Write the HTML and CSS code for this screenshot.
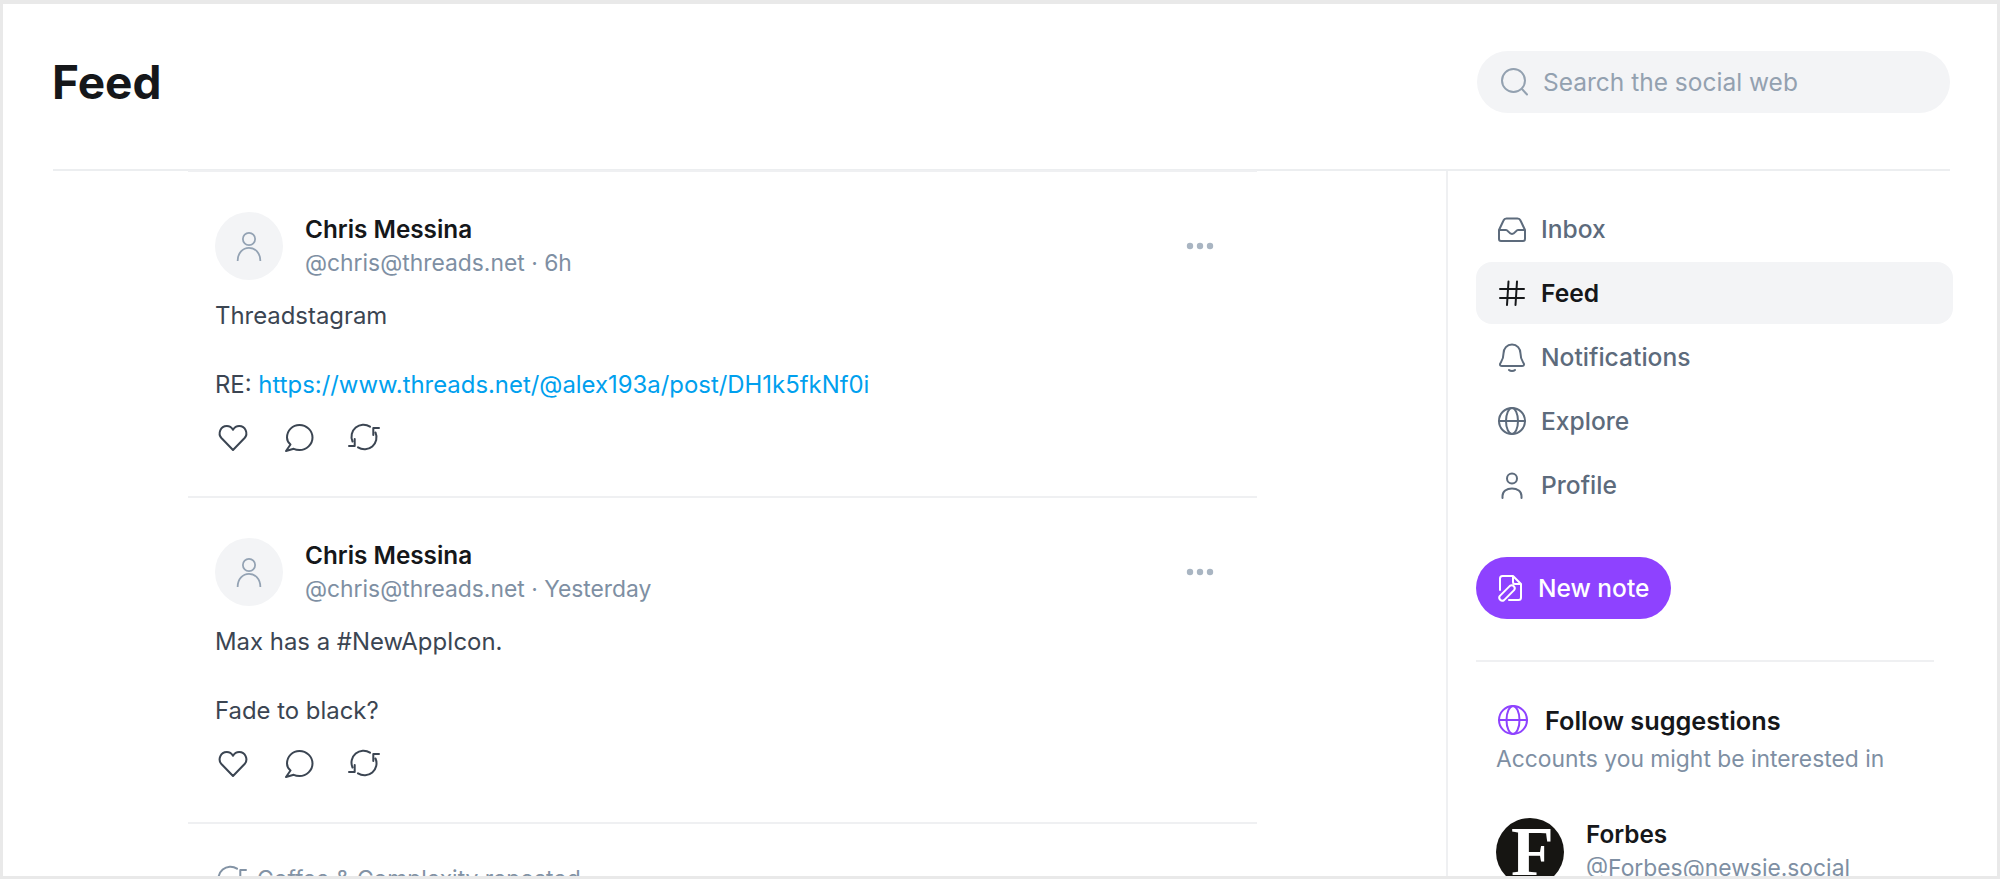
FILE: index.html
```html
<!DOCTYPE html>
<html lang="en">
<head>
<meta charset="utf-8">
<title>Feed</title>
<link rel="stylesheet" href="styles.css">
</head>
<body>
<div class="frame">
  <header class="top">
    <h1 class="title">Feed</h1>
    <div class="search">
      <svg class="ico" viewBox="0 0 32 32"><circle cx="13.500" cy="14.500" r="11.500"/><path d="M22 23 27 28.500"/></svg>
      <span>Search the social web</span>
    </div>
  </header>
  <div class="columns">
    <main class="feed">
      <div class="list">
        <article class="post">
          <div class="post-head">
            <div class="avatar"><svg class="avatar-ico" viewBox="0 0 32 36"><circle cx="16" cy="10" r="7"/><path d="M3 35C3 26 9 20 16 20s13 6 13 15"/></svg></div>
            <div class="who">
              <div class="name">Chris Messina</div>
              <div class="handle">@chris@threads.net · 6h</div>
            </div>
            <svg class="more" viewBox="0 0 32 8"><circle cx="6" cy="4" r="3.2"/><circle cx="16" cy="4" r="3.2"/><circle cx="26" cy="4" r="3.2"/></svg>
          </div>
          <div class="body">
            <p>Threadstagram</p>
            <p class="gap">RE: <a class="link" href="#">https://www.threads.net/@alex193a/post/DH1k5fkNf0i</a></p>
          </div>
          <div class="actions">
            <svg class="ico" viewBox="0 0 32 32"><path d="M16 29 4.400 17C.5 12.500 3.500 5 9.800 5c2.800 0 4.800 1.400 6.200 3.800C17.400 6.400 19.400 5 22.200 5c6.300 0 9.300 7.500 5.400 12z"/></svg>
            <svg class="ico" viewBox="0 0 32 32"><path d="M7.500 23.500 3 30l7.700-2.200c1.700.8 3.700 1.200 5.800 1.200C23.500 29 29.500 23.500 29.500 16.500S23.500 4 16.500 4 4 9.500 4 16.500c0 2.700 1.300 5.200 3.500 7z"/></svg>
            <svg class="ico" viewBox="0 0 32 32"><path d="M4.500 20.500A12 12 0 0 1 22 5.600M27.500 11.500A12 12 0 0 1 10 26.400M31 7H25.300V14M1 25H6.700V18"/></svg>
          </div>
        </article>
        <article class="post">
          <div class="post-head">
            <div class="avatar"><svg class="avatar-ico" viewBox="0 0 32 36"><circle cx="16" cy="10" r="7"/><path d="M3 35C3 26 9 20 16 20s13 6 13 15"/></svg></div>
            <div class="who">
              <div class="name">Chris Messina</div>
              <div class="handle">@chris@threads.net · Yesterday</div>
            </div>
            <svg class="more" viewBox="0 0 32 8"><circle cx="6" cy="4" r="3.2"/><circle cx="16" cy="4" r="3.2"/><circle cx="26" cy="4" r="3.2"/></svg>
          </div>
          <div class="body">
            <p>Max has a #NewAppIcon.</p>
            <p class="gap">Fade to black?</p>
          </div>
          <div class="actions">
            <svg class="ico" viewBox="0 0 32 32"><path d="M16 29 4.400 17C.5 12.500 3.500 5 9.800 5c2.800 0 4.800 1.400 6.200 3.800C17.400 6.400 19.400 5 22.200 5c6.300 0 9.300 7.500 5.400 12z"/></svg>
            <svg class="ico" viewBox="0 0 32 32"><path d="M7.500 23.500 3 30l7.700-2.200c1.700.8 3.700 1.200 5.800 1.200C23.500 29 29.500 23.500 29.500 16.500S23.500 4 16.500 4 4 9.500 4 16.500c0 2.700 1.300 5.200 3.500 7z"/></svg>
            <svg class="ico" viewBox="0 0 32 32"><path d="M4.500 20.500A12 12 0 0 1 22 5.600M27.500 11.500A12 12 0 0 1 10 26.400M31 7H25.300V14M1 25H6.700V18"/></svg>
          </div>
        </article>
        <article class="post">
          <div class="repost">
            <svg class="ico" viewBox="0 0 32 32"><path d="M4.500 20.500A12 12 0 0 1 22 5.600M31 7H25.300V14"/></svg>
            <span>Coffee &amp; Complexity reposted</span>
          </div>
        </article>
      </div>
    </main>
    <aside class="side">
      <nav class="nav">
        <a class="nav-item" href="#"><svg class="ico" viewBox="0 0 32 32"><path d="M3 17 7.500 7.500C8 6.300 9 5.500 10.500 5.500h11c1.500 0 2.500.8 3 2L29 17M3 17v9c0 1.200.8 2 2 2h22c1.200 0 2-.8 2-2v-9M3 17h7c2 0 3 4 6 4s4-4 6-4h7"/></svg>Inbox</a>
        <a class="nav-item active" href="#"><svg class="ico" viewBox="0 0 32 32"><path d="M4 12H28M4 21H28M12.500 4.500 11 28M21 4.500 19.500 28"/></svg>Feed</a>
        <a class="nav-item" href="#"><svg class="ico" viewBox="0 0 32 32"><path d="M16 3.500c-5 0-8.500 4-8.500 9 0 7-3 8.500-3.500 10.500-.3 1.300.7 2 2 2h20c1.300 0 2.300-.7 2-2-.5-2-3.500-3.500-3.500-10.500 0-5-3.500-9-8.500-9zM13 29c1.500 1.400 4.500 1.400 6 0"/></svg>Notifications</a>
        <a class="nav-item" href="#"><svg class="ico" viewBox="0 0 32 32"><circle cx="16" cy="16" r="13"/><ellipse cx="16" cy="16" rx="6" ry="13"/><path d="M3 16H29"/></svg>Explore</a>
        <a class="nav-item" href="#"><svg class="ico" viewBox="0 0 32 32"><circle cx="16" cy="9.500" r="5"/><path d="M6.500 29v-2c0-4.500 4-7.500 9.500-7.500s9.500 3 9.500 7.500v2"/></svg>Profile</a>
      </nav>
      <a class="new-note" href="#"><svg class="ico" viewBox="0 0 32 32"><path d="M6 18V6.500C6 5 7 4 8.500 4H19l8 8v13.500c0 1.500-1 2.500-2.500 2.500H15M19 4v6c0 1.500 1 2 2 2h6M5.900 23.900 15.900 13.900A3 3 0 0 1 20.100 18.100L10.100 28.100A3 3 0 0 1 5.900 23.900z"/></svg>New note</a>
      <section class="follow">
        <div class="follow-title"><svg class="ico" viewBox="0 0 32 32"><circle cx="16" cy="16" r="14"/><ellipse cx="16" cy="16" rx="6.500" ry="14"/><path d="M2 16H30"/></svg>Follow suggestions</div>
        <div class="follow-sub">Accounts you might be interested in</div>
        <div class="account">
          <div class="forbes">F</div>
          <div class="who">
            <div class="name small">Forbes</div>
            <div class="handle">@Forbes@newsie.social</div>
          </div>
        </div>
      </section>
    </aside>
  </div>
</div>
</body>
</html>
```

FILE: styles.css
```css
* { box-sizing: border-box; }
html, body { margin: 0; padding: 0; height: 879px; overflow: hidden; background: #fff; }
body { font-family: Inter, "Liberation Sans", sans-serif; color: #15171a; }
.frame { height: 879px; border: 3px solid #e9e9e9; border-top-width: 4px; overflow: hidden; background: #fff; }
.ico { width: 32px; height: 32px; flex: none; fill: none; stroke: currentColor; stroke-width: 2; stroke-linecap: round; stroke-linejoin: round; }

.top { display: flex; justify-content: space-between; align-items: center; height: 167px; margin: 0 47px 0 50px; padding: 48px 0 57px; border-bottom: 2px solid #eceef0; }
.title { margin: 0 0 0 -1px; font-size: 46px; font-weight: 700; letter-spacing: 0; line-height: 62px; }
.search { display: flex; align-items: center; gap: 11px; width: 473px; height: 62px; padding-left: 23px; border-radius: 31px; background: #f3f4f6; color: #93a1b0; font-size: 24.5px; }

.columns { display: flex; margin-left: 49px; }
.feed { width: 1396px; height: 710px; flex: none; border-right: 2px solid #eff0f2; }
.list { width: 1069px; margin-left: 136px; border-top: 2px solid #eff0f2; margin-top: -1px; }
.post { padding: 40px 27px 44px; border-bottom: 2px solid #eff0f2; height: 326px; }
.post-head { display: flex; align-items: center; gap: 22px; }
.avatar { width: 68px; height: 68px; flex: none; display: flex; align-items: center; justify-content: center; border-radius: 50%; background: #f3f4f6; }
.avatar-ico { width: 28px; height: 32px; fill: none; stroke: #93a2b3; stroke-width: 2; }
.who { flex: 1; display: flex; flex-direction: column; gap: 1px; }
.name { font-size: 24.3px; font-weight: 600; line-height: 33px; color: #15171a; }
.handle { font-size: 22.85px; line-height: 33px; color: #7e8fa3; }
.more { width: 32px; height: 8px; margin-right: 14.5px; fill: #a9b5c2; }

.body { margin-top: 19px; font-size: 23.9px; line-height: 34.5px; color: #3b4552; }
.body p { margin: 0; }
.body .gap { margin-top: 34.5px; }
.link { color: #00a0ee; text-decoration: none; }
.actions { display: flex; gap: 33.5px; margin: 18px 0 0 2px; color: #3b4552; }

.repost { display: flex; align-items: center; gap: 10px; height: 30px; color: #8393a5; font-size: 22.85px; }

.side { flex: 1; padding: 27px 0 0 28px; }
.nav { display: flex; flex-direction: column; gap: 2px; width: 477px; }
.nav-item { display: flex; align-items: center; gap: 13px; height: 62px; padding-left: 20px; border-radius: 16px; color: #5d6b7c; font-size: 24.6px; font-weight: 500; text-decoration: none; }
.nav-item.active { background: #f3f4f6; color: #15171a; font-weight: 600; }
.new-note { display: inline-flex; align-items: center; gap: 12px; height: 62px; margin-top: 41px; padding: 0 22px 0 18px; border-radius: 31px; background: #8e42ff; color: #fff; font-size: 24.5px; font-weight: 500; text-decoration: none; }
.follow { width: 458px; margin-top: 41px; padding: 38px 0 0 20px; border-top: 2px solid #eff0f2; }
.follow-title { display: flex; align-items: center; gap: 16px; height: 40px; font-size: 25.3px; font-weight: 600; }
.follow-title .ico { color: #8e42ff; margin-left: 1px; }
.follow-sub { font-size: 22.85px; line-height: 34px; margin-top: 2px; color: #7e8fa3; }
.account { display: flex; gap: 22px; margin-top: 42px; }
.forbes { width: 68px; height: 68px; flex: none; display: flex; align-items: center; justify-content: center; padding-left: 5px; border-radius: 50%; background: #161512; color: #fff; font-family: "Liberation Serif", serif; font-weight: 700; font-size: 70px; line-height: 68px; }
.name.small { font-size: 24.3px; }
```
